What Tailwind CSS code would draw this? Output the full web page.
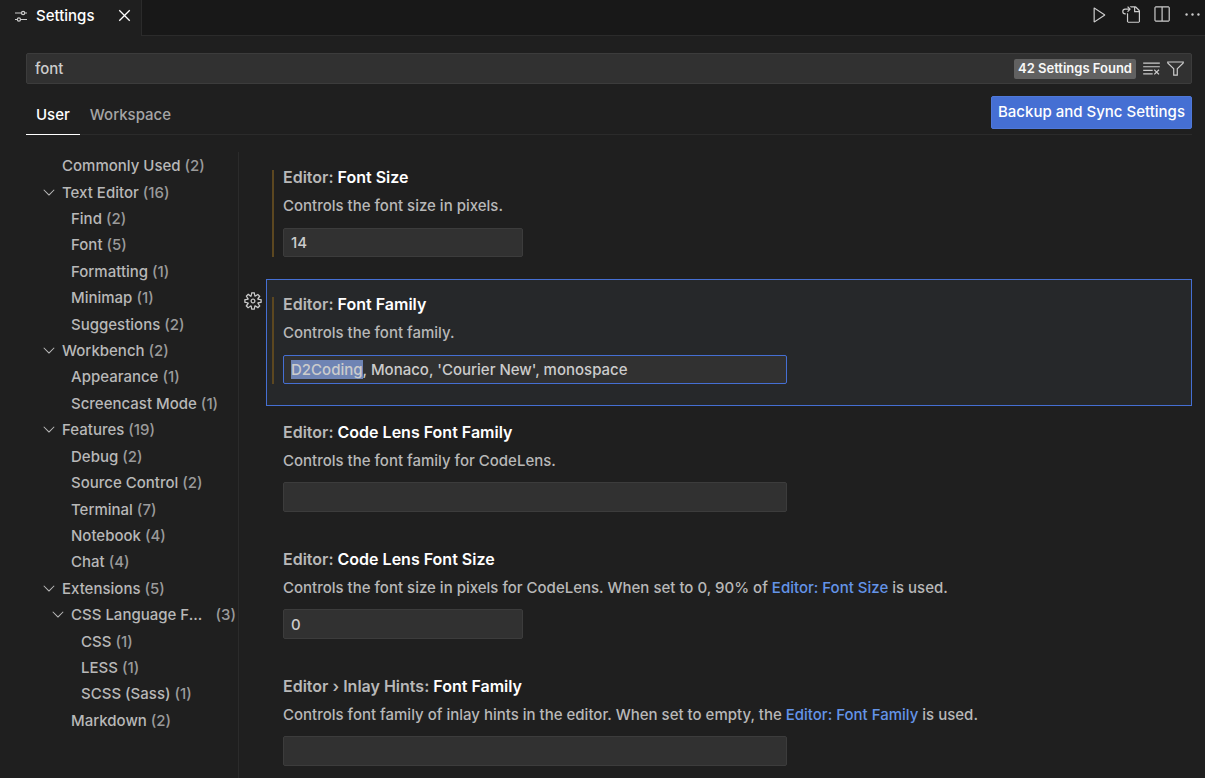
<!DOCTYPE html>
<html lang="en">

<head>
    <meta charset="UTF-8">
    <meta name="viewport" content="width=device-width, initial-scale=1.0">
    <title>Settings</title>
    <script src="https://cdn.jsdelivr.net/npm/@tailwindcss/browser@4"></script>
</head>

<body class="h-screen overflow-hidden flex flex-col bg-[#1f1f1f] text-[#b8b8b8] text-[15px] leading-5 font-medium font-['Inter','Liberation_Sans',sans-serif]">
    <!-- Tab bar -->
    <header class="flex h-9 shrink-0 bg-[#181818]">
        <div class="flex items-center w-[142px] pl-3 pb-1 border-r border-[#2b2b2b] bg-[#1f1f1f] text-white">
            <svg class="size-[18px]" viewBox="0 0 18 18" fill="none" stroke="#cccccc" stroke-width="1.2">
                <path d="M3 6h6.500M12.700 6H15M3 12.500h2.300M8.500 12.500H15" />
                <circle cx="11.100" cy="6" r="1.600" />
                <circle cx="6.900" cy="12.500" r="1.600" />
            </svg>
            <span class="ml-1.5">Settings</span>
            <button type="button" aria-label="Close" class="ml-5 pb-0.5">
                <svg class="size-[21px]" viewBox="0 0 16 16" fill="currentColor"><path d="M8 8.707l3.646 3.647.708-.707L8.707 8l3.647-3.646-.707-.708L8 7.293 4.354 3.646l-.707.708L7.293 8l-3.646 3.646.707.708L8 8.707z" /></svg>
            </button>
        </div>
        <div class="flex flex-1 items-center justify-end gap-3 pr-[3px] pb-[7px] border-b border-[#2b2b2b] text-[#cccccc]">
            <button type="button" aria-label="Run">
                <svg class="size-[19px]" viewBox="0 0 16 16" fill="currentColor"><path d="M3.780 2L3 2.410v12l.78.42 9-6V8l-9-6zM4 13.480V3.350l7.600 5.070L4 13.480z" /></svg>
            </button>
            <button type="button" aria-label="Open Settings (JSON)">
                <svg class="size-[19px]" viewBox="0 0 16 16" fill="currentColor"><path d="M6 5.914l2.060-2.060v-.708L5.915 1l-.707.707.043.043.25.25 1 1h-3a2.500 2.500 0 0 0 0 5H4V7h-.5a1.500 1.500 0 1 1 0-3h3L5.207 5.293 5.914 6 6 5.914zM11 2H8.328l-1-1H12l.71.29 3 3L16 5v9l-1 1H6l-1-1V6.500l1 .847V14h9V6h-4V2zm1 0v3h3l-3-3z" /></svg>
            </button>
            <button type="button" aria-label="Split Editor">
                <svg class="size-[19px]" viewBox="0 0 16 16" fill="currentColor"><path d="M14 1H3L2 2v11l1 1h11l1-1V2l-1-1zM8 13H3V2h5v11zm6 0H9V2h5v11z" /></svg>
            </button>
            <button type="button" aria-label="More Actions">
                <svg class="size-[19px]" viewBox="0 0 16 16" fill="currentColor"><circle cx="3" cy="8" r="1" /><circle cx="8" cy="8" r="1" /><circle cx="13" cy="8" r="1" /></svg>
            </button>
        </div>
    </header>

    <!-- Search and scope tabs -->
    <div class="shrink-0 pl-[26px] pr-[13px] pt-[17px]">
        <div class="flex items-center h-[31px] pl-2 pr-1.5 border border-[#3c3c3c] rounded-xs bg-[#313131] text-[#cccccc]">
            <input type="text" value="font" aria-label="Search settings" class="flex-1 bg-transparent outline-none">
            <span class="px-1 pb-0.5 rounded-xs bg-[#616161] text-[13px] leading-[18px] font-semibold text-[#f8f8f8]">42 Settings Found</span>
            <button type="button" aria-label="Clear Settings Search Input" class="ml-1.5">
                <svg class="size-[19px]" viewBox="0 0 16 16" fill="currentColor"><path d="M10 12.600l.7.7 1.600-1.600 1.600 1.600.8-.7L13 11l1.700-1.600-.8-.8-1.600 1.700-1.600-1.700-.7.8 1.600 1.600-1.600 1.600zM1 4h14V3H1v1zm0 3h14V6H1v1zm8 2.500V9H1v1h8v-.5zM9 13v-1H1v1h8z" /></svg>
            </button>
            <button type="button" aria-label="Filter Settings" class="ml-[5px]">
                <svg class="size-[19px]" viewBox="0 0 16 16" fill="currentColor"><path d="M15 2v1.670l-5 4.759V14H6V8.429l-5-4.760V2h14zM7 8v5h2V8l5-4.760V3H2v.24L7 8z" /></svg>
            </button>
        </div>
        <div class="flex items-start justify-between mt-3 h-[39px] border-b border-[#2b2b2b]">
            <div class="flex h-[39px]">
                <button type="button" class="px-2.5 border-b border-white text-white">User</button>
                <button type="button" class="px-2.5 border-b border-transparent text-[#a5a5a5]">Workspace</button>
            </div>
            <button type="button" class="h-[33px] px-1.5 pb-0.5 border border-[#4f78d8] rounded-xs bg-[#456fd3] text-white">Backup and Sync Settings</button>
        </div>
    </div>

    <div class="flex flex-1 min-h-0 pt-[17px]">
        <!-- Table of contents -->
        <nav class="w-[239px] shrink-0 pt-px border-r border-[#2b2b2b]">
            <ul id="toc" class="grid auto-rows-fr h-[581px]"></ul>
        </nav>

        <!-- Settings list -->
        <main class="flex-1 min-w-0 pr-[13px]">
            <section class="ml-[27px] h-[127px] border border-transparent pt-[17px] pl-[5px]">
                <div class="border-l-2 border-[#5c4720] pl-[9px]">
                    <label for="fontSize" class="block h-[14px] text-base leading-[14px] font-semibold">Editor: <span class="text-white">Font Size</span></label>
                    <p class="mt-3">Controls the font size in pixels.</p>
                    <input id="fontSize" type="text" inputmode="numeric" value="14" class="block mt-3 w-60 h-[29px] px-[7px] border border-[#3c3c3c] rounded-xs bg-[#313131] text-[#cccccc] outline-none">
                </div>
            </section>

            <section class="flex h-[127px]">
                <button type="button" aria-label="More Actions" class="flex w-[27px] pl-1 pt-3 self-start text-[#cccccc]">
                    <svg class="size-5" viewBox="0 0 16 16" fill="currentColor"><path d="M9.100 4.400L8.600 2H7.400l-.5 2.400-.7.3-2-1.300-.9.8 1.300 2-.2.7-2.400.5v1.200l2.400.5.3.8-1.300 2 .8.8 2-1.300.8.3.4 2.300h1.200l.5-2.400.8-.3 2 1.300.8-.8-1.300-2 .3-.8 2.300-.4V7.400l-2.400-.5-.3-.8 1.300-2-.8-.8-2 1.300-.7-.2zM9.400 1l.5 2.400L12 2.100l2 2-1.400 2.100 2.400.4v2.800l-2.400.5L14 12l-2 2-2.100-1.400-.5 2.400H6.600l-.5-2.400L4 13.900l-2-2 1.400-2.100L1 9.400V6.600l2.400-.5L2.100 4l2-2 2.100 1.400.4-2.400h2.800zm.6 7c0 1.100-.9 2-2 2s-2-.9-2-2 .9-2 2-2 2 .9 2 2zM8 9c.6 0 1-.4 1-1s-.4-1-1-1-1 .4-1 1 .4 1 1 1z" /></svg>
                </button>
                <div class="flex-1 border border-[#456fd3] bg-[#26282a] pt-[17px] pl-[5px]">
                    <div class="border-l-2 border-[#5c4720] pl-[9px]">
                        <label for="fontFamily" class="block h-[14px] text-base leading-[14px] font-semibold">Editor: <span class="text-white">Font Family</span></label>
                        <p class="mt-3">Controls the font family.</p>
                        <input id="fontFamily" type="text" value="D2Coding, Monaco, 'Courier New', monospace" class="block mt-3 w-[504px] h-[29px] px-[7px] border border-[#456fd3] rounded-xs bg-[#313131] text-[#cccccc] outline-none selection:bg-[#6f84b4] selection:text-[#cccccc]">
                    </div>
                </div>
            </section>

            <section class="ml-[27px] h-[127px] border border-transparent pt-[18px] pl-4">
                <label for="lensFamily" class="block h-[14px] text-base leading-[14px] font-semibold">Editor: <span class="text-white">Code Lens Font Family</span></label>
                <p class="mt-3">Controls the font family for CodeLens.</p>
                <input id="lensFamily" type="text" class="block mt-[11px] w-[504px] h-[30px] px-[7px] border border-[#3c3c3c] rounded-xs bg-[#313131] text-[#cccccc] outline-none">
            </section>

            <section class="ml-[27px] h-[127px] border border-transparent pt-[18px] pl-4">
                <label for="lensSize" class="block h-[14px] text-base leading-[14px] font-semibold">Editor: <span class="text-white">Code Lens Font Size</span></label>
                <p class="mt-3">Controls the font size in pixels for CodeLens. When set to 0, 90% of <a href="#fontSize" class="text-[#6494e8]">Editor: Font Size</a> is used.</p>
                <input id="lensSize" type="text" inputmode="numeric" value="0" class="block mt-[11px] w-60 h-[30px] px-[7px] border border-[#3c3c3c] rounded-xs bg-[#313131] text-[#cccccc] outline-none">
            </section>

            <section class="ml-[27px] h-[127px] border border-transparent pt-[18px] pl-4">
                <label for="inlayFamily" class="block h-[14px] text-base leading-[14px] font-semibold">Editor › Inlay Hints: <span class="text-white">Font Family</span></label>
                <p class="mt-3">Controls font family of inlay hints in the editor. When set to empty, the <a href="#fontFamily" class="text-[#6494e8]">Editor: Font Family</a> is used.</p>
                <input id="inlayFamily" type="text" class="block mt-[11px] w-[504px] h-[30px] px-[7px] border border-[#3c3c3c] rounded-xs bg-[#313131] text-[#cccccc] outline-none">
            </section>
        </main>
    </div>

    <script>
        // label, count, indent class, expandable, count margin class
        const entries = [
            ['Commonly Used', 2, 'pl-[42px]', false],
            ['Text Editor', 16, 'pl-[42px]', true],
            ['Find', 2, 'pl-[51px]', false],
            ['Font', 5, 'pl-[51px]', false],
            ['Formatting', 1, 'pl-[51px]', false],
            ['Minimap', 1, 'pl-[51px]', false],
            ['Suggestions', 2, 'pl-[51px]', false],
            ['Workbench', 2, 'pl-[42px]', true],
            ['Appearance', 1, 'pl-[51px]', false],
            ['Screencast Mode', 1, 'pl-[51px]', false],
            ['Features', 19, 'pl-[42px]', true],
            ['Debug', 2, 'pl-[51px]', false],
            ['Source Control', 2, 'pl-[51px]', false],
            ['Terminal', 7, 'pl-[51px]', false],
            ['Notebook', 4, 'pl-[51px]', false],
            ['Chat', 4, 'pl-[51px]', false],
            ['Extensions', 5, 'pl-[42px]', true],
            ['CSS Language F...', 3, 'pl-[51px]', true, 'ml-auto'],
            ['CSS', 1, 'pl-[61px]', false],
            ['LESS', 1, 'pl-[61px]', false],
            ['SCSS (Sass)', 1, 'pl-[61px]', false],
            ['Markdown', 2, 'pl-[51px]', false],
        ];
        const chevron = '<svg class="size-[18px]" viewBox="0 0 16 16" fill="currentColor"><path d="M7.976 10.072l4.357-4.357.62.618L8.284 11h-.618L3 6.333l.619-.618 4.357 4.357z"/></svg>';

        document.getElementById('toc').innerHTML = entries.map(([label, count, indent, open, margin = 'ml-1']) => `
            <li class="flex items-center pr-0.5 ${indent}">
                <span class="w-5 -ml-0.5 mr-0.5 pb-0.5 shrink-0">${open ? chevron : ''}</span>
                <span class="whitespace-nowrap">${label}</span>
                <span class="${margin} text-[#9a9a9a]">(${count})</span>
            </li>`).join('');

        const family = document.getElementById('fontFamily');
        family.focus();
        family.setSelectionRange(0, 8);
    </script>
</body>

</html>
